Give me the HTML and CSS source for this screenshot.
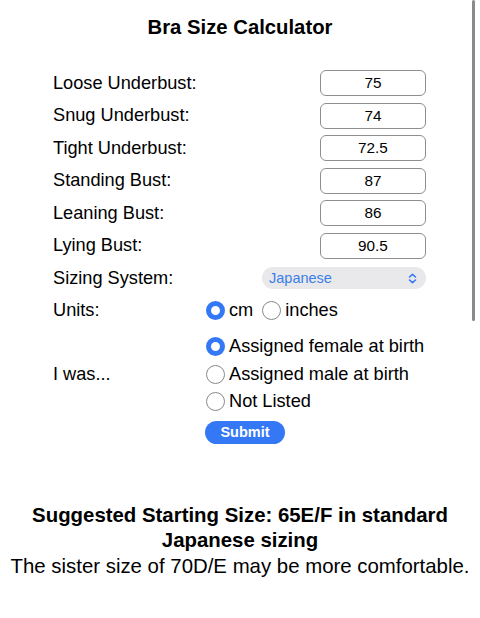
FILE: index.html
```html
<!DOCTYPE html>
<html>
<head>
<meta charset="utf-8">
<link rel="stylesheet" href="styles.css">
</head>
<body>
<div class="scrollbar"></div>
<main class="page">
  <h1 class="title">Bra Size Calculator</h1>
  <form class="calc">
    <label class="lbl">Loose Underbust:</label><input class="num" type="text" value="75">
    <label class="lbl">Snug Underbust:</label><input class="num" type="text" value="74">
    <label class="lbl">Tight Underbust:</label><input class="num" type="text" value="72.5">
    <label class="lbl">Standing Bust:</label><input class="num" type="text" value="87">
    <label class="lbl">Leaning Bust:</label><input class="num" type="text" value="86">
    <label class="lbl">Lying Bust:</label><input class="num" type="text" value="90.5">
    <span class="lbl">Sizing System:</span>
    <div class="select"><span>Japanese</span>
      <svg class="chev" width="9" height="11" viewBox="0 0 9 11"><path d="M1.5 4 L4.5 1.3 L7.5 4 M1.5 7 L4.5 9.7 L7.5 7" fill="none" stroke="#3478f6" stroke-width="1.6" stroke-linecap="round" stroke-linejoin="round"/></svg>
    </div>
    <span class="lbl">Units:</span>
    <div class="inline-radios">
      <label class="opt"><span class="radio on"></span>cm</label>
      <label class="opt"><span class="radio"></span>inches</label>
    </div>
    <span class="lbl was">I was...</span>
    <div class="stack-radios">
      <label class="opt"><span class="radio on"></span>Assigned female at birth</label>
      <label class="opt"><span class="radio"></span>Assigned male at birth</label>
      <label class="opt"><span class="radio"></span>Not Listed</label>
    </div>
    <span></span>
    <div class="submit-cell"><button class="submit" type="button">Submit</button></div>
  </form>
  <div class="result">
    <p class="result-main">Suggested Starting Size: 65E/F in standard Japanese sizing</p>
    <p class="result-sub">The sister size of 70D/E may be more comfortable.</p>
  </div>
</main>
</body>
</html>
```
FILE: styles.css
```css
* { box-sizing: border-box; }
html, body { margin: 0; padding: 0; background: #fff; }
body {
  font-family: "Liberation Sans", Arial, sans-serif;
  color: #000;
  width: 480px;
  height: 618px;
  overflow: hidden;
  position: relative;
}
.scrollbar {
  position: absolute;
  left: 472px;
  top: 0;
  width: 3px;
  height: 321px;
  background: #8a8a8a;
  border-radius: 2px;
}
.page { padding-top: 16px; }
.title {
  margin: 0;
  text-align: center;
  font-size: 20.3px;
  font-weight: bold;
  line-height: 23.4px;
}
.calc {
  margin: 27.5px 0 0 53px;
  display: grid;
  grid-template-columns: 151px 222px;
  grid-template-rows: repeat(8, 32.5px) 89px 28px;
  align-items: center;
}
.lbl {
  font-size: 18.2px;
  line-height: 21px;
}
.num {
  justify-self: end;
  width: 106px;
  height: 26px;
  margin: 0;
  border: 1px solid #8e8e8e;
  border-radius: 6px;
  background: #fff;
  font-family: "Liberation Sans", Arial, sans-serif;
  font-size: 15.3px;
  color: #000;
  text-align: center;
  padding: 0 4px;
  outline: none;
}
.select {
  justify-self: end;
  width: 164px;
  height: 22px;
  background: #e9e9eb;
  border-radius: 11px;
  display: flex;
  align-items: center;
  justify-content: space-between;
  padding: 0 9px 0 7px;
  font-size: 14.5px;
  color: #3a7ee8;
}
.chev { display: block; }
.inline-radios {
  display: flex;
  align-items: center;
  gap: 9px;
  padding-left: 2px;
}
.opt {
  display: flex;
  align-items: center;
  gap: 4px;
  font-size: 18.2px;
  line-height: 21px;
}
.radio {
  width: 19px;
  height: 19px;
  border-radius: 50%;
  border: 1.6px solid #888888;
  background: #fff;
  flex: none;
}
.radio.on {
  border: 5.5px solid #3478f6;
  background: #fff;
}
.calc > .was {
  align-self: stretch;
  margin-top: 5.5px;
  display: flex;
  align-items: flex-start;
  padding-top: 32px;
}
.stack-radios {
  align-self: stretch;
  margin-top: 5.5px;
  padding-left: 2px;
  display: flex;
  flex-direction: column;
}
.stack-radios .opt { height: 28px; }
.submit-cell { align-self: stretch; padding: 5px 0 0 1px; }
.submit {
  display: block;
  width: 80px;
  height: 23px;
  border: 0;
  border-radius: 12px;
  background: #3478f6;
  color: #fff;
  font-family: "Liberation Sans", Arial, sans-serif;
  font-size: 14.5px;
  font-weight: bold;
  padding: 0;
}
.result {
  margin-top: 59px;
  text-align: center;
  padding: 0 6px;
}
.result p { margin: 0; font-size: 20.4px; line-height: 25.5px; }
.result-main { font-weight: bold; }
```
